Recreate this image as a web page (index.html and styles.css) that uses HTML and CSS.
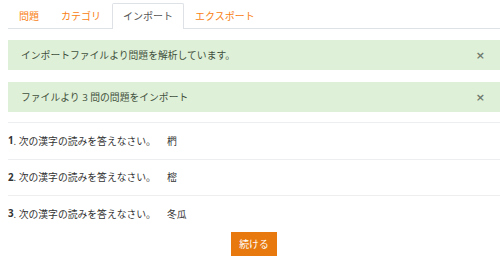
FILE: index.html
```html
<!DOCTYPE html>
<html lang="ja">
<head>
<meta charset="utf-8">
<link rel="stylesheet" href="styles.css">
</head>
<body>
<div class="page">
  <ul class="tabs">
    <li class="tab"><a>問題</a></li>
    <li class="tab"><a>カテゴリ</a></li>
    <li class="tab active"><a>インポート</a></li>
    <li class="tab"><a>エクスポート</a></li>
  </ul>
  <div class="alert"><span>インポートファイルより問題を解析しています。</span><span class="close">×</span></div>
  <div class="alert"><span>ファイルより 3 問の問題をインポート</span><span class="close">×</span></div>
  <ol class="questions">
    <li class="q"><b>1</b>. 次の漢字の読みを答えなさい。<span class="ans">椚</span></li>
    <li class="q"><b>2</b>. 次の漢字の読みを答えなさい。<span class="ans">樒</span></li>
    <li class="q"><b>3</b>. 次の漢字の読みを答えなさい。<span class="ans">冬瓜</span></li>
  </ol>
  <div class="actions"><button class="btn">続ける</button></div>
</div>
</body>
</html>
```
FILE: styles.css
```css
html, body {
  margin: 0;
  padding: 0;
  background: #fff;
}
body {
  font-family: "Open Sans", "Noto Sans CJK JP", sans-serif;
  font-size: 9.8px;
  color: #333;
  overflow: hidden;
}
.page {
  margin-left: 8px;
  width: 492px;
}
.tabs {
  list-style: none;
  margin: 0;
  padding: 3px 0 0 0;
  display: flex;
  border-bottom: 1px solid #dee2e6;
  font-size: 10px;
}
.tab a {
  display: block;
  padding: 0 10px;
  height: 24px;
  line-height: 25px;
  color: #f98012;
  border: 1px solid transparent;
  border-bottom: none;
  margin-bottom: -1px;
}
.tab.active a {
  color: #555;
  background: #fff;
  border-color: #dee2e6;
  height: 25px;
  border-radius: 2px 2px 0 0;
}
.alert {
  margin-top: 11px;
  height: 30px;
  padding: 0 13px;
  background: #dff0d8;
  color: #3f513d;
  display: flex;
  align-items: center;
  justify-content: space-between;
  box-sizing: border-box;
}
.alert + .alert {
  margin-top: 12px;
}
.close {
  font-family: "DejaVu Sans", sans-serif;
  font-weight: bold;
  font-size: 11px;
  color: #6f7a6e;
  margin-right: 2px;
}
.questions {
  list-style: none;
  margin: 10px 0 0 0;
  padding: 0;
}
.q {
  height: 36.5px;
  box-sizing: border-box;
  display: flex;
  align-items: center;
  border-top: 1px solid #eceeef;
  color: #333;
}
.q b {
  font-weight: bold;
}
.ans {
  margin-left: 11px;
}
.actions {
  display: flex;
  justify-content: center;
  margin-top: 0;
}
.btn {
  font-family: "Open Sans", "Noto Sans CJK JP", sans-serif;
  font-size: 9.8px;
  color: #fff;
  background: #e8790e;
  border: none;
  border-radius: 0;
  height: 24px;
  padding: 0 8.5px;
}
```
